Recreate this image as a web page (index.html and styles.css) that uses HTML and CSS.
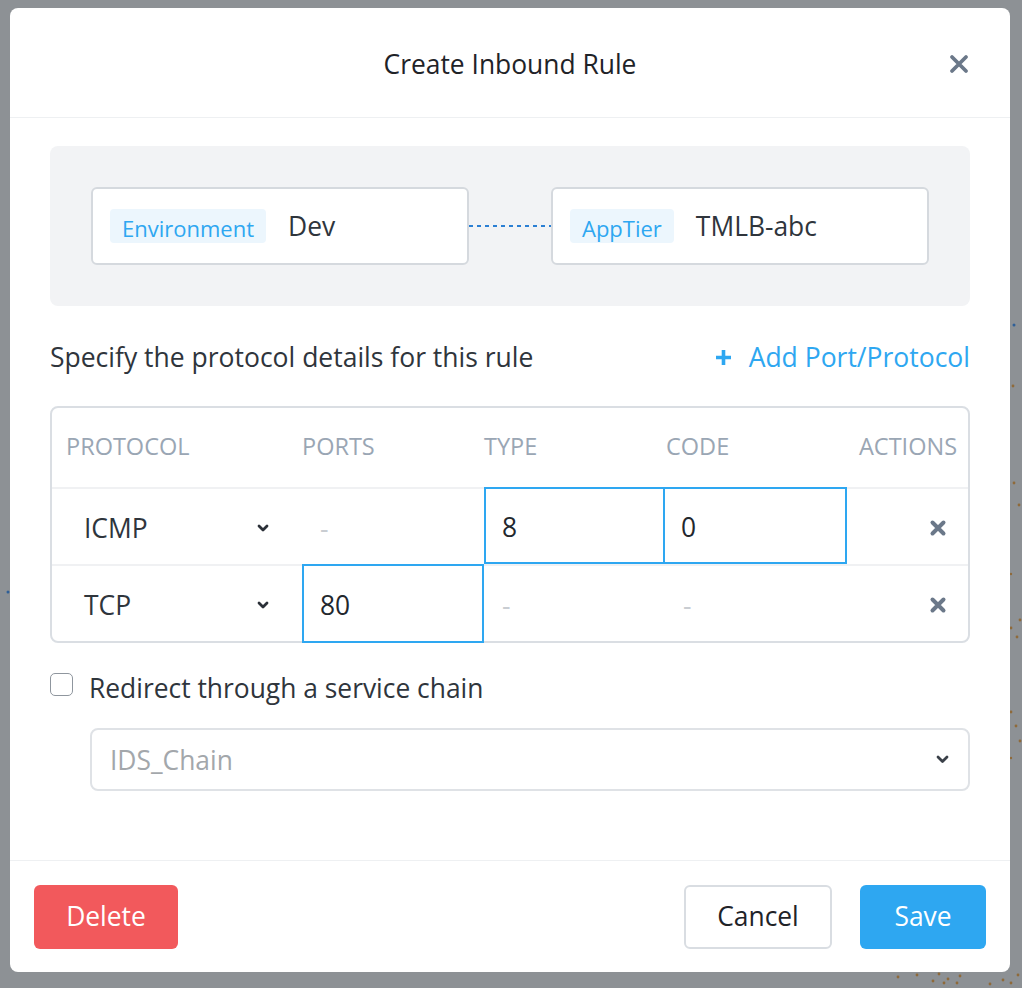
FILE: index.html
```html
<!DOCTYPE html>
<html lang="en">
<head>
<meta charset="utf-8">
<title>Create Inbound Rule</title>
<link rel="stylesheet" href="styles.css">
</head>
<body>
<svg class="bg-dots" width="1022" height="988" viewBox="0 0 1022 988" aria-hidden="true">
  <g fill="#2f5f98">
    <circle cx="1014" cy="325" r="1.5"/>
    <circle cx="8" cy="592" r="1.5"/>
  </g>
  <g fill="#8f6a3a">
    <circle cx="1013" cy="386" r="1.4"/>
    <circle cx="1014" cy="483" r="1.4"/>
    <circle cx="1019" cy="505" r="1.4"/>
    <circle cx="1011" cy="574" r="1.2"/>
    <circle cx="1020" cy="620" r="1.4"/>
    <circle cx="1011" cy="628" r="1.4"/>
    <circle cx="1017" cy="637" r="1.4"/>
    <circle cx="1011" cy="712" r="1.4"/>
    <circle cx="1016" cy="726" r="1.4"/>
    <circle cx="1020" cy="741" r="1.4"/>
    <circle cx="1011" cy="758" r="1.2"/>
    <circle cx="898" cy="977" r="1.4"/>
    <circle cx="917" cy="975" r="1.4"/>
    <circle cx="933" cy="981" r="1.4"/>
    <circle cx="939" cy="974" r="1.4"/>
    <circle cx="944" cy="983" r="1.4"/>
    <circle cx="948" cy="979" r="1.4"/>
    <circle cx="957" cy="983" r="1.4"/>
    <circle cx="960" cy="976" r="1.4"/>
    <circle cx="990" cy="984" r="1.4"/>
    <circle cx="1003" cy="980" r="1.4"/>
    <circle cx="1011" cy="983" r="1.4"/>
    <circle cx="1018" cy="975" r="1.4"/>
  </g>
</svg>

<div class="modal">
  <header class="modal-header">
    <h1 class="modal-title">Create Inbound Rule</h1>
    <button class="close-btn" type="button" aria-label="Close">
      <svg width="20" height="20" viewBox="0 0 20 20"><path d="M3 3 L17 17 M17 3 L3 17" stroke="#6b7889" stroke-width="3.8" stroke-linecap="round" fill="none"/></svg>
    </button>
  </header>

  <div class="modal-body">
    <div class="flow-box">
      <div class="entity-card">
        <span class="tag">Environment</span>
        <span class="entity-name">Dev</span>
      </div>
      <div class="connector"></div>
      <div class="entity-card">
        <span class="tag">AppTier</span>
        <span class="entity-name">TMLB-abc</span>
      </div>
    </div>

    <div class="section-row">
      <span class="section-label">Specify the protocol details for this rule</span>
      <a class="add-link">
        <svg width="17" height="17" viewBox="0 0 17 17"><path d="M8.5 1 V16 M1 8.5 H16" stroke="#2ea7f1" stroke-width="3.6" fill="none"/></svg>
        <span>Add Port/Protocol</span>
      </a>
    </div>

    <div class="rules-table">
      <div class="rt-row rt-head">
        <div class="th th-protocol">PROTOCOL</div>
        <div class="th">PORTS</div>
        <div class="th">TYPE</div>
        <div class="th th-code">CODE</div>
        <div class="th th-actions">ACTIONS</div>
      </div>
      <div class="rt-row">
        <div class="cell cell-protocol"><span>ICMP</span>
          <svg class="chev" width="12" height="8" viewBox="0 0 12 8"><path d="M2 2 L6 6 L10 2" stroke="#2b3038" stroke-width="2.8" fill="none" stroke-linecap="round" stroke-linejoin="round"/></svg>
        </div>
        <div class="cell cell-dash">-</div>
        <div class="cell cell-input">8</div>
        <div class="cell cell-input">0</div>
        <div class="cell cell-actions">
          <svg width="18" height="18" viewBox="0 0 18 18"><path d="M3.5 3.5 L14.5 14.5 M14.5 3.5 L3.5 14.5" stroke="#6b7889" stroke-width="4" stroke-linecap="round" fill="none"/></svg>
        </div>
      </div>
      <div class="rt-row rt-last">
        <div class="cell cell-protocol"><span>TCP</span>
          <svg class="chev" width="12" height="8" viewBox="0 0 12 8"><path d="M2 2 L6 6 L10 2" stroke="#2b3038" stroke-width="2.8" fill="none" stroke-linecap="round" stroke-linejoin="round"/></svg>
        </div>
        <div class="cell cell-input">80</div>
        <div class="cell cell-dash">-</div>
        <div class="cell cell-dash">-</div>
        <div class="cell cell-actions">
          <svg width="18" height="18" viewBox="0 0 18 18"><path d="M3.5 3.5 L14.5 14.5 M14.5 3.5 L3.5 14.5" stroke="#6b7889" stroke-width="4" stroke-linecap="round" fill="none"/></svg>
        </div>
      </div>
    </div>

    <label class="check-row">
      <span class="checkbox"></span>
      <span>Redirect through a service chain</span>
    </label>

    <div class="chain-select">
      <span>IDS_Chain</span>
      <svg width="13" height="9" viewBox="0 0 13 9"><path d="M2 2 L6.5 6.5 L11 2" stroke="#3a4048" stroke-width="2.8" fill="none" stroke-linecap="round" stroke-linejoin="round"/></svg>
    </div>
  </div>

  <footer class="modal-footer">
    <button class="btn btn-danger" type="button">Delete</button>
    <div class="spacer"></div>
    <button class="btn btn-default" type="button">Cancel</button>
    <button class="btn btn-primary" type="button">Save</button>
  </footer>
</div>
</body>
</html>
```

FILE: styles.css
```css
* { box-sizing: border-box; }

html, body { margin: 0; }

body {
  position: relative;
  width: 1022px;
  height: 988px;
  overflow: hidden;
  background: #8d9195;
  padding: 8px 12px 16px 10px;
  font-family: "Open Sans", "Noto Sans", sans-serif;
  color: #2f353c;
}

.bg-dots {
  position: absolute;
  left: 0;
  top: 0;
}

.modal {
  position: relative;
  width: 1000px;
  height: 964px;
  background: #fff;
  border-radius: 8px;
  display: flex;
  flex-direction: column;
}

/* Header */
.modal-header {
  height: 110px;
  border-bottom: 1px solid #eef0f2;
  display: grid;
  grid-template-columns: 1fr auto 1fr;
  align-items: center;
  padding: 2px 41px 0;
}

.modal-title {
  grid-column: 2;
  margin: 0;
  font-size: 26.4px;
  font-weight: 400;
  line-height: 36px;
  color: #1f2328;
}

.close-btn {
  grid-column: 3;
  justify-self: end;
  width: 20px;
  height: 20px;
  padding: 0;
  border: 0;
  background: none;
  display: flex;
}

/* Body */
.modal-body {
  flex: 1;
  padding: 28px 40px 0;
  display: flex;
  flex-direction: column;
}

.flow-box {
  height: 160px;
  background: #f2f3f5;
  border-radius: 8px;
  padding: 0 41px;
  display: flex;
  align-items: center;
}

.entity-card {
  width: 378px;
  height: 78px;
  background: #fff;
  border: 2px solid #d5d9de;
  border-radius: 6px;
  display: flex;
  align-items: center;
  gap: 22px;
  padding-left: 17px;
}

.tag {
  height: 34px;
  padding: 0 12px;
  background: #ecf6fd;
  color: #2ea7f1;
  border-radius: 4px;
  font-size: 22px;
  line-height: 38px;
}

.entity-name {
  font-size: 26.4px;
  color: #2f353c;
}

.connector {
  flex: 1;
  height: 2px;
  background: repeating-linear-gradient(to right, #2b7fd3 0 4px, transparent 4px 8px);
}

.section-row {
  margin-top: 33px;
  height: 36px;
  display: flex;
  justify-content: space-between;
  align-items: center;
  font-size: 26.5px;
}

.add-link {
  display: flex;
  align-items: center;
  gap: 17px;
  color: #2ea7f1;
  font-size: 26.5px;
}

/* Table */
.rules-table {
  margin-top: 31px;
  border: 2px solid #dadee3;
  border-radius: 8px;
}

.rt-row {
  display: grid;
  grid-template-columns: 250px 182px 181px 182px 1fr;
  height: 77px;
  border-top: 2px solid #f0f1f3;
}

.rt-head {
  height: 79px;
  border-top: 0;
}

.th {
  display: flex;
  align-items: center;
  padding-bottom: 3px;
  font-size: 23.5px;
  color: #9aa6b4;
}

.th-protocol { padding-left: 14px; }
.th-code { padding-left: 1px; }
.th-actions { padding-left: 12px; }

.cell {
  display: flex;
  align-items: center;
  padding-top: 2px;
  font-size: 26.4px;
  color: #2f353c;
}

.cell-protocol {
  justify-content: space-between;
  padding-left: 32px;
  padding-right: 33px;
}

.cell-dash {
  padding-left: 18px;
  color: #c9cdd2;
}

.cell-input {
  margin-top: -2px;
  border: 2px solid #2ea7f1;
  padding-left: 16px;
  color: #22272d;
}

.cell-input + .cell-input { margin-left: -2px; }

.rt-last .cell-input { margin-bottom: -2px; }

.cell-actions {
  justify-content: flex-end;
  padding-right: 21px;
}

/* Checkbox */
.check-row {
  margin-top: 28px;
  display: flex;
  align-items: flex-start;
  gap: 16px;
  font-size: 26.4px;
  line-height: 34px;
}

.checkbox {
  width: 23px;
  height: 23px;
  margin-top: 2px;
  border: 1.5px solid #8f969e;
  border-radius: 5px;
  background: #fff;
}

.chain-select {
  margin: 23px 0 0 40px;
  height: 63px;
  border: 2px solid #dfe2e6;
  border-radius: 8px;
  display: flex;
  align-items: center;
  justify-content: space-between;
  padding: 0 19px 0 18px;
  font-size: 26.4px;
  color: #a3a7ab;
}

/* Footer */
.modal-footer {
  height: 112px;
  border-top: 1px solid #eef0f2;
  display: flex;
  align-items: center;
  padding: 0 24px;
}

.spacer { flex: 1; }

.btn {
  height: 64px;
  border-radius: 6px;
  font-family: inherit;
  font-size: 26.4px;
  padding: 0 0 2px;
  border: 0;
}

.btn-danger {
  width: 144px;
  background: #f2595c;
  color: #fff;
}

.btn-default {
  width: 148px;
  background: #fff;
  border: 2px solid #d9dde2;
  color: #1f2328;
}

.btn-primary {
  width: 126px;
  margin-left: 28px;
  background: #2ea7f1;
  color: #fff;
}
```
